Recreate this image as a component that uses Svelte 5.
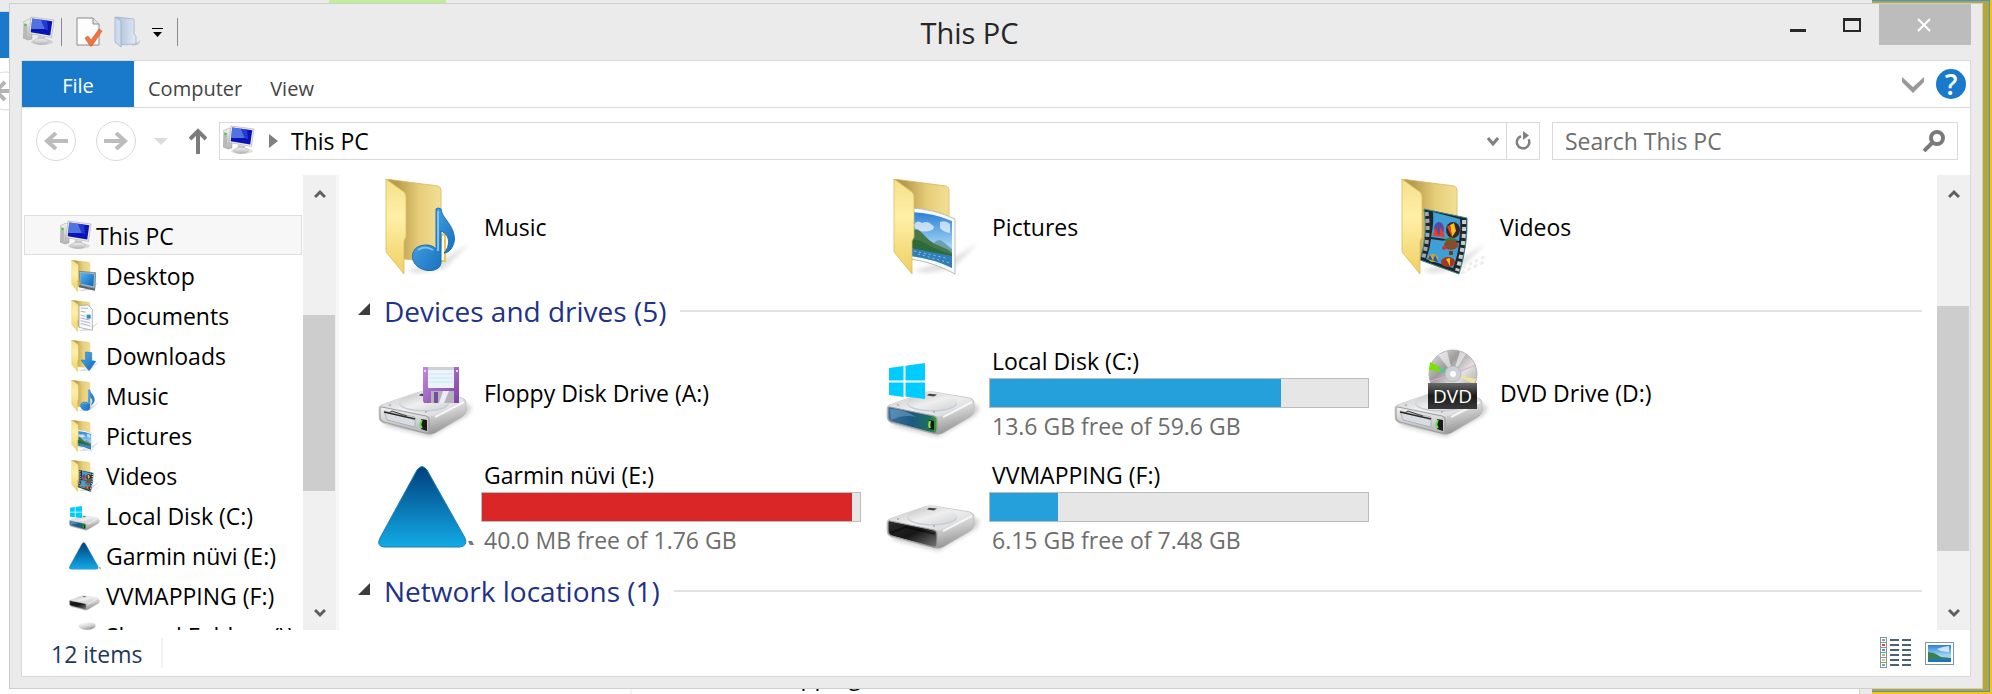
<script lang="ts">
    type Item = { name: string; icon: string; free?: string; used?: number; full?: boolean };

    const tree = [
        { name: 'Desktop', icon: 'desktop' },
        { name: 'Documents', icon: 'documents' },
        { name: 'Downloads', icon: 'downloads' },
        { name: 'Music', icon: 'music' },
        { name: 'Pictures', icon: 'pictures' },
        { name: 'Videos', icon: 'videos' },
        { name: 'Local Disk (C:)', icon: 'windows' },
        { name: 'Garmin nüvi (E:)', icon: 'garmin' },
        { name: 'VVMAPPING (F:)', icon: 'drive' },
        { name: 'Shared Folders (\\\\', icon: 'network' }
    ];

    const folders: Item[] = [
        { name: 'Music', icon: 'music' },
        { name: 'Pictures', icon: 'pictures' },
        { name: 'Videos', icon: 'videos' }
    ];

    const drives: Item[] = [
        { name: 'Floppy Disk Drive (A:)', icon: 'floppy' },
        { name: 'Local Disk (C:)', icon: 'windows', free: '13.6 GB free of 59.6 GB', used: 77 },
        { name: 'DVD Drive (D:)', icon: 'dvd' },
        { name: 'Garmin nüvi (E:)', icon: 'garmin', free: '40.0 MB free of 1.76 GB', used: 98, full: true },
        { name: 'VVMAPPING (F:)', icon: 'drive', free: '6.15 GB free of 7.48 GB', used: 18 }
    ];

    const listColors = ['#7fa88a', '#e8403a', '#5b8fd8', '#a4c85a', '#e6c94a', '#7fa88a'];

    let search = $state('');
    let selected = $state('This PC');
</script>

{#snippet pc()}
    <svg class="pc" viewBox="0 0 32 32" aria-hidden="true">
        <ellipse cx="19" cy="26" rx="11" ry="3" fill="#000" opacity=".12" />
        <path d="M0 6 6 3 9 4V23L5 24 0 22Z" fill="url(#silver)" stroke="#9d9d9d" stroke-width=".5" />
        <path d="M1 7 4 8V23L1 21Z" fill="#b9b9b9" />
        <path d="M1.500 8h2v2h-2z" fill="#35d62a" />
        <path d="M15 20 22 21 22 26H14Z" fill="#c4c8cc" />
        <ellipse cx="18" cy="25.500" rx="7.500" ry="3" fill="url(#silver)" stroke="#b0b0b0" stroke-width=".5" />
        <path d="M8 1 31 4 28.500 21.500 6 17.500Z" fill="#ececec" stroke="#9c9c9c" stroke-width=".5" />
        <path d="M9.300 2.500 29.300 5.200 27.200 19.500 7.700 16.300Z" fill="#0a14b4" />
        <path d="M9.300 2.500 18 3.800 22 13 8.200 13Z" fill="#6c9cf4" opacity=".7" />
        <path d="M18 3.800 24 4.500 25 14 22 13Z" fill="#2f4be0" opacity=".7" />
    </svg>
{/snippet}

{#snippet driveBody(face: string)}
    <path d="M4 80 52 92 90 70 94 62 80 54Z" fill="#000" opacity=".18" filter="url(#soft)" />
    <path d="M3 60 38 48Q42 46 48 47L84 53Q88 54 88 58V66Q87 70 84 72L57 88Q53 90 49 89L5 78Q1 76 1 72V64Q1 61 3 60Z" fill="url(#side)" stroke="#b2b2b2" stroke-width=".6" />
    <path d="M4 60 38 48.500Q42 46.800 48 48L83 53.500Q87 55 83 57L57 70Q53 72 49 71L5 63Q1 61 4 60Z" fill="url(#top)" />
    <ellipse cx="46" cy="58.500" rx="25" ry="8" fill="#c3ccd9" />
    <ellipse cx="46" cy="57" rx="25" ry="8" fill="url(#top)" />
    <path d="M57 72 86 57" stroke="#fff" stroke-width="2" opacity=".8" />
    <path d="M43 48.800 51 49.500 48 51.500 41 50.500Z" fill="#444" />
    <circle cx="12" cy="60" r="1" fill="#aaa" />
    <circle cx="48" cy="67" r="1" fill="#aaa" />
    <path d="M4 62 48 71Q51 72 51 75V85Q51 89 47 88L6 77Q2 76 2 72V64Q2 61 4 62Z" fill={face} stroke="#9f9f9f" stroke-width="1.200" />
{/snippet}

{#snippet slot()}
    <path d="M6 66 37 72V82L9 75Z" fill="#d7dbe2" stroke="#9a9a9a" stroke-width=".6" />
    <path d="M6 67 37 74" stroke="#2a2a2a" stroke-width="1.500" />
    <path d="M11 68 14 66 29 71" fill="none" stroke="#444" stroke-width="1" />
    <path d="M43 74 49 75V86L43 84Z" fill="#1a1a1a" />
    <path d="M44 75C42 78 42 81 44 83" fill="none" stroke="#6be04a" stroke-width="2" />
{/snippet}

{#snippet icon(name: string, size: string)}
    <svg class={size} viewBox="0 0 96 96" aria-hidden="true">
        {#if name === 'floppy'}
            {@render driveBody('url(#silver)')}
            {@render slot()}
            <path d="M45 22H81V58H46L45 56Z" fill="url(#purple)" />
            <path d="M50 22H76V43H50Z" fill="#eaf5fb" />
            <path d="M50 22H76V25H50Z" fill="#cfcfd6" />
            <path d="M51 29H75M51 33H75M51 37H75" stroke="#cfe5f0" stroke-width="1" />
            <path d="M53 46H76V58H53Z" fill="#b3b3be" />
            <path d="M56 47H60V58H56Z" fill="#7a4a9c" />
            <path d="M65 46H71L66 58H61Z" fill="#ececf2" />
            <path d="M46 25h2v2h-2zM78 25h2v2h-2z" fill="#e8d5f2" />
        {:else if name === 'windows'}
            {@render driveBody('url(#teal)')}
            <path d="M4 64C16 64 24 68 30 72 20 70 14 71 5 75Z" fill="#8fc8f0" opacity=".35" />
            <path d="M43 75 48 76V85L43 84Z" fill="#101d10" />
            <path d="M44 76C43 79 43 81 44 83" fill="none" stroke="#a4e04a" stroke-width="2" />
            <path d="M3 23 17.500 21V35.500H3ZM19.500 20.700 39 18V35.500H19.500ZM3 37.500H17.500V52L3 50ZM19.500 37.500H39V54L19.500 51.500Z" fill="#00ccff" />
        {:else if name === 'drive'}
            {@render driveBody('url(#cave)')}
            <path d="M4 73 20 67 49 74V76L20 69 5 75Z" fill="#000" opacity=".5" />
        {:else if name === 'network'}
            {@render driveBody('url(#silver)')}
            <ellipse cx="54" cy="17" rx="26" ry="12" fill="url(#side)" />
        {:else if name === 'garmin'}
            <path d="M39 11Q44 4 49 11L87 79Q90 87 82 88H6Q-2 87 2 79Z" fill="url(#garmin)" stroke="#1a7fb6" stroke-width="1" />
            <path d="M90 82H94L96 86H92Z" fill="#777" />
        {:else if name === 'dvd'}
            {@render driveBody('url(#silver)')}
            {@render slot()}
            <circle cx="59" cy="29" r="24" fill="url(#disc)" stroke="#a9a9a9" stroke-width=".8" />
            <path d="M59 29 36 17 35 25Z" fill="#7be000" />
            <path d="M59 29 44 22 47 27Z" fill="#4ac0c0" />
            <path d="M59 29 82 20M59 29 37 36" stroke="#e6a6d8" stroke-width="1" />
            <path d="M59 29 82 34 80 39Z" fill="#f2e2a0" />
            <path d="M59 29 44 10 53 6Z M59 29 72 9 66 6Z" fill="#fff" opacity=".55" />
            <circle cx="59" cy="29" r="8" fill="#cdd0d4" stroke="#aaa" stroke-width=".6" />
            <circle cx="59" cy="29" r="3" fill="#fff" />
            <path d="M34 38H83V64H34Z" fill="url(#badge)" />
            <text x="58.500" y="58" text-anchor="middle" font-size="19" fill="#fff">DVD</text>
        {:else}
            <path d="M27 92 66 80 92 64 66 90 40 94Z" fill="#000" opacity=".12" filter="url(#soft)" />
            <path d="M8 0 60 7Q63 8 63 11V84L26 80Z" fill="url(#back)" stroke="#d5b95c" stroke-width=".8" />
            {#if name === 'music'}
                <path d="M63 56 67 55V82H62Z" fill="#fff" stroke="#e4c65a" stroke-width="2" />
                <path d="M58 30Q60 28 63 30C64 40 76 45 76.500 60 76 68 71 74 66 74 72 68 73 56 63 52V84C62 93 48 93 42 89 32 84 32 70 42 67 48 65 55 66 58 70Z" fill="url(#note)" stroke="#1b6fb5" stroke-width="1" />
                <path d="M60 32V72M40 71Q47 66 55 71" fill="none" stroke="#8fd0fa" stroke-width="2" opacity=".8" />
            {:else if name === 'pictures'}
                <path d="M25 29Q48 30 69 40V95Q50 84 25 80Z" fill="#fafafa" stroke="#b9bcc0" stroke-width="1" />
                <path d="M25 33Q48 34 66 42V89Q48 80 25 77Z" fill="url(#sky)" />
                <path d="M28 46Q31 40 36 44 42 41 46 46 50 48 46 51 38 54 30 51ZM54 43Q60 41 64 45V54Q57 53 54 49Z" fill="#fff" opacity=".65" />
                <path d="M46 66Q52 59 56 62 62 67 66 70V76L46 72Z" fill="#6f9fae" />
                <path d="M25 53Q30 48 34 52 38 56 43 61 49 66 56 68 62 70 66 74V77L25 70Z" fill="#45774a" />
                <path d="M25 61Q34 60 42 66 52 71 66 76V78L25 71Z" fill="#2c6a38" />
                <path d="M25 69 66 77V89Q48 80 25 77Z" fill="#2f7fb8" />
                <path d="M28 72 60 79M32 75 64 84" stroke="#8cc4e4" stroke-width="1" stroke-dasharray="2 3" />
            {:else if name === 'videos'}
                <path d="M62 92 92 77M67 94 90 83" stroke="#eee" stroke-width="3" stroke-dasharray="4 3" />
                <path d="M30 30 73 39Q74 66 65 95L26 81Q34 55 30 30Z" fill="#20262a" stroke="#3a8890" stroke-width="1" />
                <path d="M39 33 66 40Q67 50 65 62L37 58Q40 45 39 33Z" fill="#3fa0d8" />
                <path d="M37 60 65 64Q64 76 59 89L32 80Q36 70 37 60Z" fill="#3fa0d8" />
                <path d="M32.500 33Q36 56 29 80" fill="none" stroke="#a2a9ac" stroke-width="4" stroke-dasharray="4 3" />
                <path d="M70 41Q71 66 63 92" fill="none" stroke="#c8cdce" stroke-width="4" stroke-dasharray="4 3" />
                <ellipse cx="45" cy="50" rx="5" ry="7" fill="#5a4a9a" />
                <path d="M39 57 41 48 45 57 47 48 51 58Z" fill="#f03a28" />
                <ellipse cx="59" cy="51" rx="7" ry="8" fill="#3a2422" />
                <path d="M56 46 60 44 62 52 58 58Z" fill="#f4c21c" />
                <path d="M53 48 56 46 58 58Z" fill="#e2401e" />
                <path d="M48 62H64L62 60 56 58Z" fill="#3a7a3a" />
                <ellipse cx="57" cy="66" rx="7" ry="5" fill="#8a4a2c" />
                <circle cx="50" cy="69" r="2" fill="#d63030" />
                <path d="M55 72H59V76H55Z" fill="#642" />
                <ellipse cx="39" cy="79" rx="5" ry="4" fill="#c8a838" />
                <path d="M34 80 36 76 39 82 41 76 44 83Z" fill="#2c4fa0" />
                <ellipse cx="54" cy="83" rx="7" ry="5" fill="#a8351f" />
                <path d="M52 80 56 79 56 87Z" fill="#f4c21c" />
            {:else if name === 'desktop'}
                <path d="M30 34 80 38 78 86 34 76Z" fill="#9fb4c4" stroke="#5d6c78" stroke-width="2" />
                <path d="M34 38 75 43 73 79 36 71Z" fill="url(#note)" />
                <path d="M30 76 78 86 78 92 30 82Z" fill="#54606a" />
            {:else if name === 'documents'}
                <path d="M30 17 58 15 70 28V91L30 82Z" fill="#fafafa" stroke="#8e9aa6" stroke-width="2" />
                <path d="M35 24 57 25M35 34 50 36M35 46 50 49M35 54 62 60M35 62 64 69M35 70 64 78" stroke="#aab6ce" stroke-width="3" />
                <path d="M53 44H65V56H53Z" fill="#2f8fc0" />
            {:else if name === 'downloads'}
                <path d="M50 36 68 38V62L80 64 60 92 36 60 50 61Z" fill="url(#note)" stroke="#1b78ba" stroke-width="2" />
            {/if}
            <path d="M8 0 26 13Q28 15 28 18V58L26 62V95L8 73Z" fill="url(#flap)" stroke="#d9bc5e" stroke-width=".8" />
        {/if}
    </svg>
{/snippet}

{#snippet chevron(cls: string)}
    <svg class={cls} viewBox="0 0 12 10" aria-hidden="true"><path d="M1 8 6 3 11 8" fill="none" stroke="#5e5e5e" stroke-width="3" /></svg>
{/snippet}

{#snippet group(title: string)}
    <h2>
        <svg class="expander" viewBox="0 0 12 12" aria-hidden="true"><path d="M12 0V12H0Z" fill="#3c3c3c" /></svg>
        <span>{title}</span>
    </h2>
{/snippet}

{#snippet tiles(items: Item[])}
    <ul class="tiles">
        {#each items as item}
            <li class="tile">
                {@render icon(item.icon, 'large')}
                <div class="info">
                    <span class="name">{item.name}</span>
                    {#if item.free}
                        <div class="bar" role="meter" aria-label="Used space" aria-valuemin="0" aria-valuemax="100" aria-valuenow={item.used}>
                            <div class="used" class:full={item.full} style="width: {item.used}%"></div>
                        </div>
                        <span class="free">{item.free}</span>
                    {/if}
                </div>
            </li>
        {/each}
    </ul>
{/snippet}

<svg class="defs" aria-hidden="true">
    <defs>
        <filter id="soft" x="-20%" y="-20%" width="140%" height="140%"><feGaussianBlur stdDeviation="2" /></filter>
        <linearGradient id="silver" x1="0" y1="0" x2="0" y2="1"><stop offset="0" stop-color="#f2f2f2" /><stop offset="1" stop-color="#b4b4b6" /></linearGradient>
        <linearGradient id="side" x1=".5" y1="0" x2="1" y2="1"><stop offset="0" stop-color="#fff" /><stop offset=".5" stop-color="#cecece" /><stop offset="1" stop-color="#7c7c7c" /></linearGradient>
        <linearGradient id="top" x1="0" y1="0" x2="1" y2="1"><stop offset="0" stop-color="#c4c4c4" /><stop offset=".5" stop-color="#efefef" /><stop offset="1" stop-color="#d2d2d2" /></linearGradient>
        <linearGradient id="cave" x1="0" y1="0" x2="1" y2="1"><stop offset="0" stop-color="#2c2c2c" /><stop offset=".5" stop-color="#161616" /><stop offset="1" stop-color="#777" /></linearGradient>
        <linearGradient id="teal"><stop offset="0" stop-color="#3c6f9c" /><stop offset=".5" stop-color="#1b5a80" /><stop offset=".85" stop-color="#1d7060" /><stop offset="1" stop-color="#3aa03a" /></linearGradient>
        <linearGradient id="purple" x1="0" y1="0" x2="1" y2="1"><stop offset="0" stop-color="#c48ae0" /><stop offset="1" stop-color="#7c42a2" /></linearGradient>
        <linearGradient id="garmin" x1="0" y1="0" x2="0" y2="1"><stop offset="0" stop-color="#003f7c" /><stop offset="1" stop-color="#12abe6" /></linearGradient>
        <linearGradient id="disc" x1="0" y1="0" x2="1" y2="1"><stop offset="0" stop-color="#e8e8e8" /><stop offset=".35" stop-color="#9c9c9c" /><stop offset=".6" stop-color="#e2e2e2" /><stop offset="1" stop-color="#8f8f8f" /></linearGradient>
        <linearGradient id="badge" x1="0" y1="0" x2="0" y2="1"><stop offset="0" stop-color="#6a6a6a" /><stop offset=".5" stop-color="#1a1a1a" /><stop offset="1" stop-color="#3a3a3a" /></linearGradient>
        <linearGradient id="back"><stop offset=".2" stop-color="#b99b4e" /><stop offset=".6" stop-color="#e6cd78" /><stop offset="1" stop-color="#f3df94" /></linearGradient>
        <linearGradient id="flap" x1="0" y1="0" x2="0" y2="1"><stop offset="0" stop-color="#f5e08a" /><stop offset=".4" stop-color="#fff0a8" /><stop offset="1" stop-color="#efcf62" /></linearGradient>
        <linearGradient id="note" x1="0" y1="0" x2="1" y2="1"><stop offset="0" stop-color="#5ab4f0" /><stop offset="1" stop-color="#0a64b4" /></linearGradient>
        <linearGradient id="sky" x1="0" y1="0" x2="0" y2="1"><stop offset="0" stop-color="#2c7fd6" /><stop offset=".6" stop-color="#9fd4f4" /></linearGradient>
        <linearGradient id="pale"><stop offset="0" stop-color="#a9bfd8" /><stop offset="1" stop-color="#e0eaf6" /></linearGradient>
    </defs>
</svg>

<div class="desktop">
    <!-- window that lies behind this one -->
    <div class="behind">
        <div class="behind-title"></div>
        <div class="behind-tab"></div>
        <svg class="behind-nav" viewBox="0 0 40 40" aria-hidden="true">
            <circle cx="20" cy="20" r="19" fill="none" stroke="#dadada" />
            <path d="M33 20H10M19 11 10 20 19 29" fill="none" stroke="#b4b4b4" stroke-width="4" />
        </svg>
        <div class="highlight"></div>
        <span class="behind-text">Mapping</span>
        <div class="behind-split"></div>
        <div class="behind-frame"></div>
    </div>
    <div class="olive"></div>

    <div class="window">
        <header class="titlebar">
            <div class="quick">
                {@render pc()}
                <i class="rule"></i>
                <button class="doc" aria-label="Properties">
                    <svg viewBox="0 0 27 30" aria-hidden="true">
                        <path d="M1 1H17L23 7V28H1Z" fill="#fdfdfd" stroke="#8a8a8a" />
                        <path d="M17 1V7H23" fill="#e4e4e4" stroke="#8a8a8a" />
                        <path d="M9 21 12 19 15 23 23 12 26 14 16 29 14 29Z" fill="#ee7440" stroke="#d65a26" stroke-width=".6" />
                    </svg>
                </button>
                <button class="newfolder" aria-label="New folder">
                    <svg viewBox="0 0 27 32" aria-hidden="true">
                        <path d="M17 30 27 24 24 29Z" fill="#c9cdd2" />
                        <path d="M2 1 20 3V18L22 20V28L6 29Z" fill="url(#pale)" stroke="#98a9bf" stroke-width=".7" />
                        <path d="M1 1 7 5V31L1 26Z" fill="#cddcec" stroke="#98a9bf" stroke-width=".7" />
                    </svg>
                </button>
                <button class="customize" aria-label="Customize Quick Access Toolbar">
                    <svg viewBox="0 0 11 9" aria-hidden="true"><path d="M0 0H11V1H0ZM1 4H10L5.500 9Z" fill="#000" /></svg>
                </button>
                <i class="rule"></i>
            </div>
            <h1>This PC</h1>
            <div class="controls">
                <button class="min" aria-label="Minimize"><svg viewBox="0 0 18 14" aria-hidden="true"><path d="M1 11H17V14H1Z" fill="#282828" /></svg></button>
                <button class="max" aria-label="Maximize"><svg viewBox="0 0 18 14" aria-hidden="true"><path d="M0 0H18V14H0ZM2 3V12H16V3Z" fill="#282828" fill-rule="evenodd" /></svg></button>
                <button class="close" aria-label="Close"><svg viewBox="0 0 18 14" aria-hidden="true"><path d="M2 1 14 13M14 1 2 13" stroke="#fff" stroke-width="2" /></svg></button>
            </div>
        </header>

        <div class="client">
            <nav class="ribbon">
                <button class="file">File</button>
                <button class="tab">Computer</button>
                <button class="tab">View</button>
                <button class="expand" aria-label="Expand the Ribbon">
                    <svg viewBox="0 0 22 17" aria-hidden="true"><path d="M0 1V6L11 17 22 6V1L11 11Z" fill="#999" /></svg>
                </button>
                <button class="help" aria-label="Help">?</button>
            </nav>

            <div class="navbar">
                <button class="round" aria-label="Back"><svg viewBox="0 0 24 18" aria-hidden="true"><path d="M24 9H3M12 1 3 9 12 17" fill="none" stroke="#bcbcbc" stroke-width="4" /></svg></button>
                <button class="round" aria-label="Forward"><svg viewBox="0 0 24 18" aria-hidden="true"><path d="M0 9H21M12 1 21 9 12 17" fill="none" stroke="#bcbcbc" stroke-width="4" /></svg></button>
                <button class="recent" aria-label="Recent locations"><svg viewBox="0 0 14 7" aria-hidden="true"><path d="M0 0H14L7 7Z" fill="#dcdcdc" /></svg></button>
                <button class="up" aria-label="Up"><svg viewBox="0 0 18 26" aria-hidden="true"><path d="M9 26V3M1 11 9 3 17 11" fill="none" stroke="#7c7c7c" stroke-width="4" /></svg></button>
                <div class="address">
                    {@render pc()}
                    <svg class="crumb" viewBox="0 0 9 14" aria-hidden="true"><path d="M0 0V14L9 7Z" fill="#808080" /></svg>
                    <span>This PC</span>
                    <button class="history" aria-label="Previous locations"><svg viewBox="0 0 12 10" aria-hidden="true"><path d="M1 2 6 8 11 2" fill="none" stroke="#808080" stroke-width="3" /></svg></button>
                    <button class="refresh" aria-label="Refresh"><svg viewBox="0 0 16 20" aria-hidden="true"><path d="M6 5.300A6.200 6.200 0 1 0 13.600 8.300" fill="none" stroke="#808080" stroke-width="2.500" /><path d="M8 0 14 4.500 8 9Z" fill="#808080" /></svg></button>
                </div>
                <label class="search">
                    <input type="text" placeholder="Search This PC" aria-label="Search This PC" bind:value={search}>
                    <svg viewBox="0 0 22 22" aria-hidden="true"><circle cx="14" cy="8" r="6" fill="none" stroke="#7a7a7a" stroke-width="4" /><path d="M10 12 1 21" stroke="#7a7a7a" stroke-width="4" /></svg>
                </label>
            </div>

            <div class="panes">
                <aside>
                    <div class="tree">
                        <button class="node root" class:selected={selected === 'This PC'} onclick={() => (selected = 'This PC')}>{@render pc()}This PC</button>
                        {#each tree as node}
                            <button class="node" class:selected={selected === node.name} onclick={() => (selected = node.name)}>
                                {@render icon(node.icon, 'small')}{node.name}
                            </button>
                        {/each}
                    </div>
                    <div class="scrollbar">
                        {@render chevron('arrow')}
                        <div class="thumb tree-thumb"></div>
                        {@render chevron('arrow flip')}
                    </div>
                </aside>
                <main>
                    <div class="content">
                        {@render tiles(folders)}
                        {@render group('Devices and drives (5)')}
                        {@render tiles(drives)}
                        {@render group('Network locations (1)')}
                    </div>
                    <div class="scrollbar">
                        {@render chevron('arrow')}
                        <div class="thumb main-thumb"></div>
                        {@render chevron('arrow flip')}
                    </div>
                </main>
            </div>

            <footer>
                <span class="count">12 items</span>
                <button class="details" aria-label="Details view">
                    <svg viewBox="0 0 32 32" aria-hidden="true">
                        {#each listColors as color, i}
                            <rect x=".5" y={0.5 + i * 5} width="6" height="5" fill="#fff" stroke="#8494a8" />
                            <rect x="2" y={2 + i * 5} width="3" height="2" fill={color} />
                            <path d="M10 {3 + i * 5}h9m3 0h9" stroke="#4c6078" stroke-width="2" />
                        {/each}
                    </svg>
                </button>
                <button class="thumbs" aria-label="Large icons view">
                    <svg viewBox="0 0 29 23" aria-hidden="true">
                        <rect x=".5" y=".5" width="28" height="22" fill="#fff" stroke="#8494a8" />
                        <path d="M3 3H26V20H3Z" fill="url(#sky)" />
                        <path d="M12 7 18 5 24 4V10L16 9Z" fill="#fff" opacity=".7" />
                        <path d="M3 10 9 11 16 15 26 16V18H3Z" fill="#3c8052" />
                        <path d="M3 17H26V20H3Z" fill="#1d74c4" />
                    </svg>
                </button>
            </footer>
        </div>
    </div>
</div>

<style>
:global(body) {
    margin: 0;
    font-family: "Open Sans", "Noto Sans", sans-serif;
    font-size: 23px;
    line-height: 28px;
    color: #000;
}

button {
    display: flex;
    align-items: center;
    justify-content: center;
    padding: 0;
    border: 0;
    background: none;
    font: inherit;
    color: inherit;
}

svg {
    flex: none;
}

.defs {
    position: absolute;
    width: 0;
    height: 0;
}

.desktop {
    position: relative;
    box-sizing: border-box;
    height: 100vh;
    min-height: 480px;
    padding: 3px 9px 5px;
    overflow: hidden;
}

/* Behind */
.behind,
.olive {
    position: absolute;
    inset: 0;
}

.behind {
    background: #fff;
}

.behind > * {
    position: absolute;
}

.behind-title {
    inset: 0 0 auto;
    height: 11px;
    background: #ebebeb;
    border-bottom: 1px solid #d9d9d9;
}

.behind-tab {
    top: 12px;
    left: 0;
    width: 100px;
    height: 46px;
    background: #1979ca;
}

.behind-nav {
    top: 71px;
    left: -14px;
    width: 40px;
    height: 40px;
}

.highlight {
    top: 0;
    left: 329px;
    width: 117px;
    height: 3px;
    background: #c0ee94;
}

.behind-text {
    bottom: 4px;
    left: 767px;
}

.behind-split {
    bottom: 0;
    left: 630px;
    width: 2px;
    height: 5px;
    background: #f3f3f3;
}

.behind-frame {
    right: 0;
    bottom: 0;
    width: 132px;
    height: 8px;
    border-left: 1px solid #d0d0d0;
    background: #ebebeb;
}

.olive {
    left: auto;
    width: 120px;
    box-sizing: border-box;
    border: 2px solid #fcc112;
    border-width: 0 2px 2px 0;
    background: #b5a636;
    box-shadow: inset -1px -1px #3c96e8, inset 0 1px #3c96e8;
}

/* Window */
.window {
    position: relative;
    display: flex;
    flex-direction: column;
    box-sizing: border-box;
    height: 100%;
    padding: 0 11px 11px;
    border: 1px solid #cfcfcf;
    background: #ebebeb;
}

.titlebar {
    display: flex;
    flex: none;
    height: 56px;
}

.titlebar h1 {
    flex: 1;
    margin: 0 10px 0 0;
    font-size: 29px;
    font-weight: 400;
    line-height: 58px;
    text-align: center;
    color: #262626;
}

.quick {
    display: flex;
    align-items: center;
    padding-left: 2px;
}

.pc {
    width: 32px;
    height: 32px;
}

.rule {
    width: 1px;
    height: 28px;
    margin-left: 6px;
    background: #8a8a8a;
}

.doc {
    margin: 0 11px 0 14px;
}

.doc svg {
    width: 27px;
    height: 30px;
}

.newfolder svg {
    width: 27px;
    height: 32px;
}

.customize {
    margin: 0 8px 0 11px;
}

.customize svg {
    width: 11px;
    height: 9px;
}

.controls {
    display: flex;
    align-items: flex-start;
}

.controls button {
    width: 54px;
    height: 41px;
}

.controls .close {
    width: 92px;
    background: #bcbcbc;
}

.controls svg {
    width: 18px;
    height: 14px;
}

.client {
    display: flex;
    flex: 1;
    flex-direction: column;
    min-height: 0;
    border: 1px solid #d9d9d9;
    background: #fff;
}

/* Ribbon */
.ribbon {
    display: flex;
    align-items: center;
    flex: none;
    height: 46px;
    padding-right: 4px;
    border-bottom: 1px solid #dadbdc;
    font-size: 20px;
    color: #444;
}

.file {
    align-self: stretch;
    width: 112px;
    padding-top: 4px;
    background: #1979ca;
    color: #fff;
}

.tab {
    height: 46px;
    margin-left: 14px;
    margin-right: 14px;
    padding-top: 10px;
}

.expand {
    margin-left: auto;
    margin-right: 12px;
}

.expand svg {
    width: 22px;
    height: 17px;
}

.help {
    width: 30px;
    height: 30px;
    border-radius: 50%;
    background: #1979ca;
    font-size: 28px;
    font-weight: 600;
    color: #fff;
}

/* Navigation bar */
.navbar {
    display: flex;
    align-items: center;
    flex: none;
    height: 66px;
    padding: 0 12px 1px 14px;
}

.round {
    box-sizing: border-box;
    width: 40px;
    height: 40px;
    margin-right: 20px;
    border: 1px solid #dadada;
    border-radius: 50%;
}

.round svg {
    width: 24px;
    height: 18px;
}

.recent {
    margin: 0 21px 0 -2px;
}

.recent svg {
    width: 14px;
    height: 7px;
}

.up {
    margin-right: 12px;
}

.up svg {
    width: 18px;
    height: 26px;
}

.address,
.search {
    display: flex;
    align-items: center;
    box-sizing: border-box;
    height: 38px;
    border: 1px solid #d9d9d9;
}

.address {
    flex: 1;
    padding-left: 3px;
}

.crumb {
    width: 9px;
    height: 14px;
    margin: 0 13px 0 14px;
}

.history {
    width: 26px;
    height: 36px;
    margin-left: auto;
}

.history svg {
    width: 12px;
    height: 10px;
}

.refresh {
    width: 33px;
    height: 36px;
    border-left: 1px solid #d9d9d9;
}

.refresh svg {
    width: 16px;
    height: 20px;
}

.search {
    width: 406px;
    margin-left: 12px;
    padding: 0 12px;
}

.search input {
    flex: 1;
    min-width: 0;
    padding: 0;
    border: 0;
    outline: none;
    background: none;
    font: inherit;
}

.search input::placeholder {
    color: #6d6d6d;
    opacity: 1;
}

.search svg {
    width: 22px;
    height: 22px;
}

/* Panes */
.panes {
    display: flex;
    flex: 1;
    min-height: 0;
}

aside {
    display: flex;
    flex: none;
    width: 314px;
    border-right: 3px solid #f7f7f7;
}

.tree {
    flex: 1;
    padding: 40px 1px 0 2px;
    overflow: hidden;
}

.node {
    justify-content: flex-start;
    gap: 5px;
    box-sizing: border-box;
    width: 100%;
    height: 40px;
    padding: 2px 0 0 44px;
    border: 1px solid transparent;
    white-space: nowrap;
}

.root {
    gap: 4px;
    padding-left: 35px;
}

.selected {
    border-color: #dedede;
    background: #f7f7f7;
}

.small {
    width: 32px;
    height: 32px;
}

.scrollbar {
    display: flex;
    flex-direction: column;
    align-items: center;
    flex: none;
    width: 33px;
    background: #f0f0f0;
}

.arrow {
    width: 12px;
    height: 10px;
    margin: 14px 0;
}

.flip {
    margin-top: auto;
    margin-bottom: 12px;
    transform: rotate(180deg);
}

.thumb {
    align-self: flex-start;
    width: 32px;
    background: #cdcdcd;
}

/* the margins are the distance scrolled */
.tree-thumb {
    height: 176px;
    margin-top: 102px;
}

.main-thumb {
    height: 245px;
    margin-top: 93px;
}

main {
    display: flex;
    flex: 1;
    min-width: 0;
}

.content {
    flex: 1;
    min-width: 0;
    margin-top: -5px;
    padding: 0 15px 0 19px;
    overflow: hidden;
    clip-path: inset(5px 0 0);
}

.tiles {
    display: grid;
    grid-template-columns: repeat(auto-fill, 508px);
    margin: 0 -15px 2px 20px;
    padding: 0;
    list-style: none;
}

.tile {
    display: flex;
    align-items: center;
    gap: 7px;
    height: 114px;
}

.large {
    width: 96px;
    height: 96px;
}

.info {
    display: flex;
    flex-direction: column;
}

.name,
.free {
    padding-left: 3px;
}

.bar {
    box-sizing: border-box;
    width: 380px;
    height: 30px;
    margin: 3px 0 4px;
    border: 1px solid #bcbcbc;
    background: #e6e6e6;
}

.used {
    height: 100%;
    background: #26a0da;
}

.used.full {
    background: #da2626;
}

.free {
    color: #6d6d6d;
}

h2 {
    display: flex;
    align-items: center;
    gap: 14px;
    height: 50px;
    margin: 0;
    font-size: 28px;
    font-weight: 400;
    color: #1e3287;
}

h2::after {
    content: "";
    flex: 1;
    height: 2px;
    background: #e2e2e2;
}

.expander {
    width: 12px;
    height: 12px;
    margin-bottom: 5px;
}

/* Status bar */
footer {
    display: flex;
    align-items: center;
    flex: none;
    height: 46px;
    padding: 0 16px 0 29px;
}

.count {
    margin-right: auto;
    padding: 2px 19px 0 0;
    border-right: 2px solid #f3f3f3;
    color: #1e395b;
}

.details {
    margin-right: 13px;
}

.details svg {
    width: 32px;
    height: 32px;
}

.thumbs svg {
    width: 29px;
    height: 23px;
}
</style>
